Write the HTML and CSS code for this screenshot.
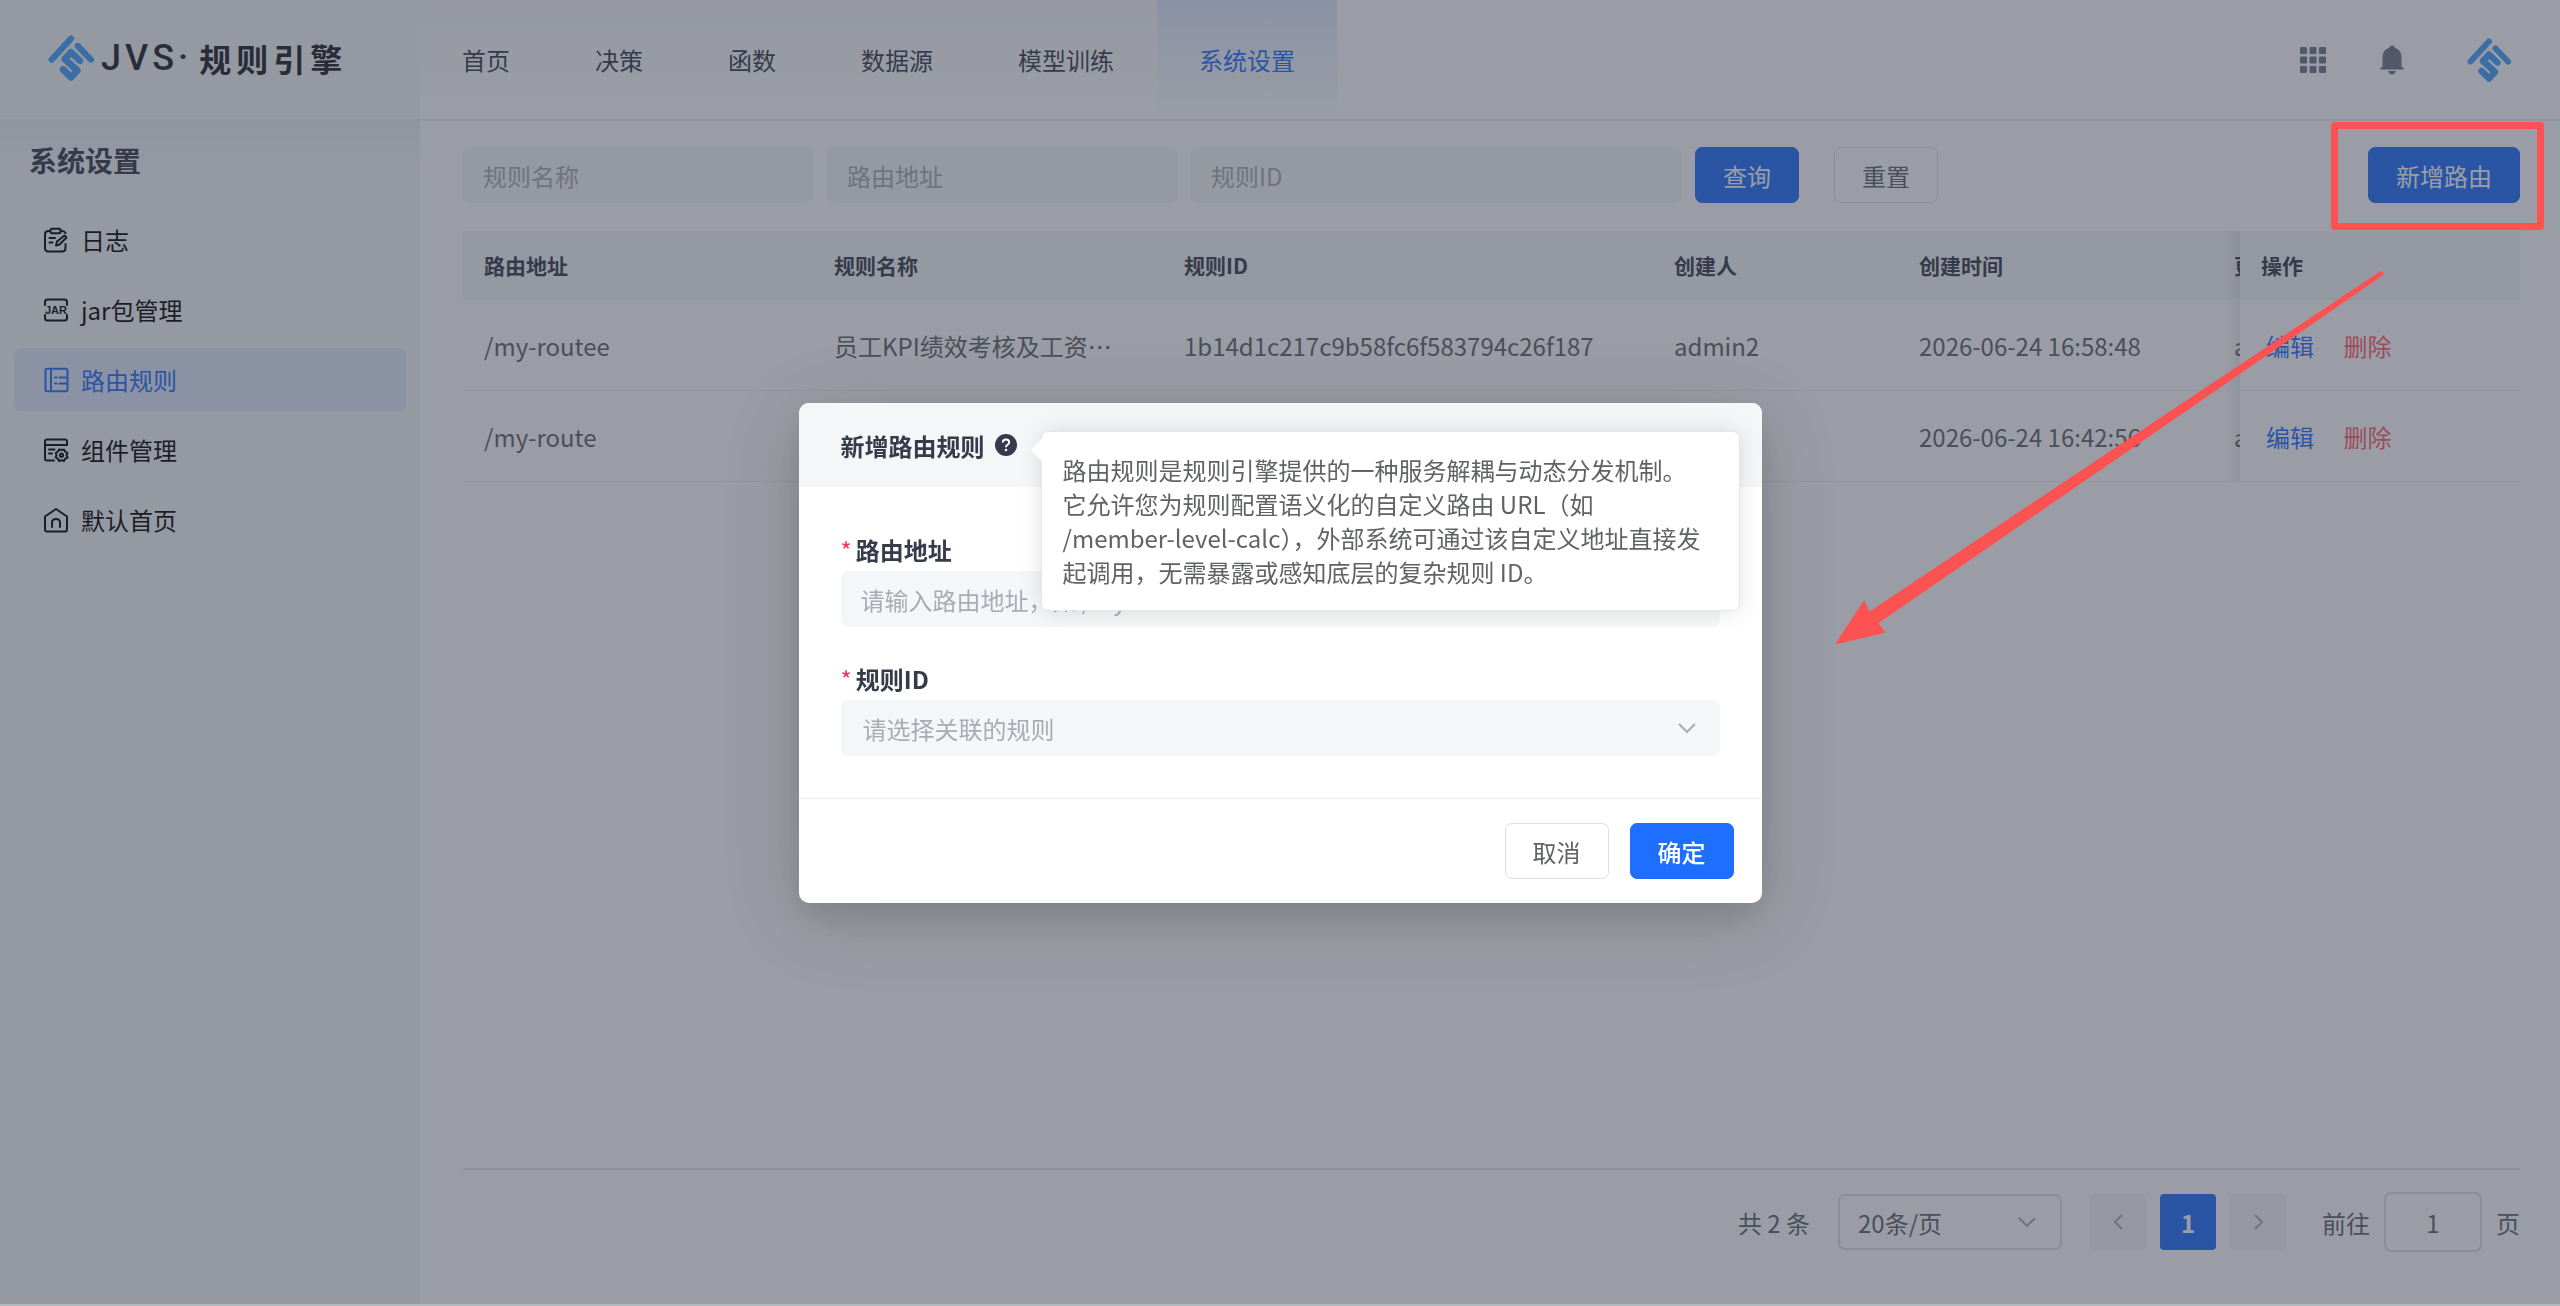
FILE: index.html
```html
<!DOCTYPE html>
<html lang="zh-CN">
<head>
    <meta charset="UTF-8">
    <meta name="viewport" content="width=device-width, initial-scale=1.0">
    <title>JVS·规则引擎 - 路由规则</title>
    <link rel="stylesheet" href="styles.css">
</head>
<body>
    <svg class="sprite" aria-hidden="true">
        <symbol id="jvs-logo" viewBox="0 0 44 44">
            <g fill="none" stroke="currentColor" stroke-width="6" stroke-linecap="round" stroke-linejoin="round">
                <path d="M3.500 23.500 22 3.500"/>
                <path d="M28.500 10.500 41 23.500"/>
                <path d="M30.500 24.500 22 16.500 16 23 28 34 22 40.500 14.500 33" stroke-width="6.500"/>
            </g>
        </symbol>
    </svg>

    <div class="app">
        <aside class="sidebar">
            <div class="brand">
                <svg class="brand-icon" aria-hidden="true"><use href="#jvs-logo"/></svg>
                <span class="brand-en">JVS·</span>
                <span class="brand-name">规则引擎</span>
            </div>
            <div class="menu">
                <h2 class="menu-title">系统设置</h2>
                <a href="#" class="menu-item">
                    <svg viewBox="0 0 24 24" class="menu-icon" aria-hidden="true">
                        <path d="M6 3H4.500Q1 3 1 6.500V20Q1 23.500 4.500 23.500H18Q21.500 23.500 21.500 20V16M17 3H18Q20.500 3 21.500 5"/>
                        <rect x="6.500" y="0.800" width="10" height="4.500" rx="1.500"/>
                        <path d="M5.500 10H11M5.500 14.500H8.500M12 17.500 13 13.500 20.500 7.500 22.500 9.500 15.500 16.500Z"/>
                    </svg>
                    日志
                </a>
                <a href="#" class="menu-item">
                    <svg viewBox="0 0 24 24" class="menu-icon" aria-hidden="true">
                        <path d="M1 7V4Q1 1.500 3.500 1.500H20.500Q23 1.500 23 4V7M1 17V20Q1 22.500 3.500 22.500H20.500Q23 22.500 23 20V17"/>
                        <text x="12" y="16" class="jar-text">JAR</text>
                    </svg>
                    jar包管理
                </a>
                <a href="#" class="menu-item active">
                    <svg viewBox="0 0 24 24" class="menu-icon" aria-hidden="true">
                        <rect x="1.500" y="0.800" width="22" height="22.500" rx="1.500"/>
                        <path d="M7 1V23M11 9.500H12.500M15.500 9.500H23M11 15.500H12.500M15.500 15.500H23"/>
                    </svg>
                    路由规则
                </a>
                <a href="#" class="menu-item">
                    <svg viewBox="0 0 24 24" class="menu-icon" aria-hidden="true">
                        <path d="M10 22.500H3Q1 22.500 1 20.500V3.500Q1 1.500 3 1.500H21Q23 1.500 23 3.500V7H1M5 11.500H10.500M5 15.500H8"/>
                        <path d="M15 11.500 17.500 12 20 11.500 21 13.500 23.500 15 22.500 17.200 23.500 19.500 21 20.800 20 23 17.500 22.300 15 23 14 20.800 11.700 19.500 12.500 17.200 11.700 15 14 13.500Z"/>
                        <circle cx="17.500" cy="17.200" r="1.600"/>
                    </svg>
                    组件管理
                </a>
                <a href="#" class="menu-item">
                    <svg viewBox="0 0 24 24" class="menu-icon" aria-hidden="true">
                        <path d="M1 8.500 12 1 23 8.500V21.500Q23 23.500 21 23.500H3Q1 23.500 1 21.500Z"/>
                        <path d="M8 19V14.500Q8 11 12 11Q16 11 16 14.500V19"/>
                    </svg>
                    默认首页
                </a>
            </div>
        </aside>

        <div class="main">
            <header class="header">
                <nav class="nav">
                    <a href="#" class="nav-item">首页</a>
                    <a href="#" class="nav-item">决策</a>
                    <a href="#" class="nav-item">函数</a>
                    <a href="#" class="nav-item">数据源</a>
                    <a href="#" class="nav-item">模型训练</a>
                    <a href="#" class="nav-item active">系统设置</a>
                </nav>
                <div class="header-actions">
                    <button class="icon-btn" aria-label="应用">
                        <svg viewBox="0 0 26 26" width="26" height="26">
                            <rect x="0" y="0" width="7" height="7" rx="1"/>
                            <rect x="9.500" y="0" width="7" height="7" rx="1"/>
                            <rect x="19" y="0" width="7" height="7" rx="1"/>
                            <rect x="0" y="9.500" width="7" height="7" rx="1"/>
                            <rect x="9.500" y="9.500" width="7" height="7" rx="1"/>
                            <rect x="19" y="9.500" width="7" height="7" rx="1"/>
                            <rect x="0" y="19" width="7" height="7" rx="1"/>
                            <rect x="9.500" y="19" width="7" height="7" rx="1"/>
                            <rect x="19" y="19" width="7" height="7" rx="1"/>
                        </svg>
                    </button>
                    <button class="icon-btn" aria-label="消息">
                        <svg viewBox="0 0 24 30" width="24" height="30">
                            <path d="M12 0.500Q14.500 0.500 14.800 2.800Q21.500 5 21.500 12V21.500L23.500 23Q24.500 24.500 23 24.500H1Q-0.500 24.500 0.500 23L2.500 21.500V12Q2.500 5 9.200 2.800Q9.500 0.500 12 0.500Z"/>
                            <path d="M8 26H16Q15 29.500 12 29.500Q9 29.500 8 26Z"/>
                        </svg>
                    </button>
                    <button class="icon-btn avatar" aria-label="用户">
                        <svg width="44" height="44"><use href="#jvs-logo"/></svg>
                    </button>
                </div>
            </header>

            <div class="content">
                <form class="search-bar">
                    <input type="text" class="field search-field" placeholder="规则名称" aria-label="规则名称">
                    <input type="text" class="field search-field" placeholder="路由地址" aria-label="路由地址">
                    <input type="text" class="field search-field wide" placeholder="规则ID" aria-label="规则ID">
                    <button type="button" class="btn btn-primary">查询</button>
                    <button type="button" class="btn btn-reset">重置</button>
                    <button type="button" class="btn btn-primary btn-add">新增路由</button>
                </form>

                <div class="table-wrap">
                    <table class="table">
                        <colgroup>
                            <col class="col-lg">
                            <col class="col-lg">
                            <col class="col-id">
                            <col class="col-sm">
                            <col class="col-time">
                            <col>
                            <col class="col-op">
                        </colgroup>
                        <thead>
                            <tr>
                                <th>路由地址</th>
                                <th>规则名称</th>
                                <th>规则ID</th>
                                <th>创建人</th>
                                <th>创建时间</th>
                                <th class="clip">更新人</th>
                                <th class="fixed">操作</th>
                            </tr>
                        </thead>
                        <tbody>
                            <tr>
                                <td>/my-routee</td>
                                <td>员工KPI绩效考核及工资⋯</td>
                                <td>1b14d1c217c9b58fc6f583794c26f187</td>
                                <td>admin2</td>
                                <td>2026-06-24 16:58:48</td>
                                <td class="clip">admin2</td>
                                <td class="fixed">
                                    <a href="#" class="link">编辑</a>
                                    <a href="#" class="link danger">删除</a>
                                </td>
                            </tr>
                            <tr>
                                <td>/my-route</td>
                                <td></td>
                                <td></td>
                                <td></td>
                                <td>2026-06-24 16:42:56</td>
                                <td class="clip">admin2</td>
                                <td class="fixed">
                                    <a href="#" class="link">编辑</a>
                                    <a href="#" class="link danger">删除</a>
                                </td>
                            </tr>
                        </tbody>
                    </table>
                </div>

                <div class="pagination">
                    <span>共 2 条</span>
                    <div class="select-box page-size">
                        <select aria-label="每页条数">
                            <option>20条/页</option>
                        </select>
                        <svg class="chevron" viewBox="0 0 18 10" aria-hidden="true"><path d="M1 1 9 9 17 1"/></svg>
                    </div>
                    <div class="pager">
                        <button class="page-btn" aria-label="上一页">
                            <svg viewBox="0 0 9 16" width="9" height="16"><path d="M8 1 1 8 8 15"/></svg>
                        </button>
                        <button class="page-btn current">1</button>
                        <button class="page-btn" aria-label="下一页">
                            <svg viewBox="0 0 9 16" width="9" height="16"><path d="M1 1 8 8 1 15"/></svg>
                        </button>
                    </div>
                    <label class="jumper">前往<input type="text" value="1">页</label>
                </div>
            </div>
        </div>
    </div>

    <div class="overlay">
        <div class="dialog" role="dialog" aria-labelledby="dialogTitle">
            <div class="dialog-header">
                <h3 class="dialog-title" id="dialogTitle">新增路由规则</h3>
                <div class="help">
                    <svg viewBox="0 0 22 22" width="22" height="22" aria-hidden="true">
                        <circle cx="11" cy="11" r="11" fill="#363b4c"/>
                        <path d="M7.800 8.600Q7.800 5.500 11 5.500Q14.200 5.500 14.200 8.300Q14.200 10 12.500 10.900Q11 11.700 11 13.200" fill="none" stroke="#fff" stroke-width="2"/>
                        <circle cx="11" cy="16" r="1.300" fill="#fff"/>
                    </svg>
                    <div class="tooltip" role="tooltip">路由规则是规则引擎提供的一种服务解耦与动态分发机制。它允许您为规则配置语义化的自定义路由 URL（如 /member-level-calc），外部系统可通过该自定义地址直接发起调用，无需暴露或感知底层的复杂规则 ID。</div>
                </div>
            </div>
            <form class="dialog-body">
                <div class="form-item">
                    <label for="routePath" class="form-label">路由地址</label>
                    <input type="text" id="routePath" class="field" placeholder="请输入路由地址，如 /my-route">
                </div>
                <div class="form-item">
                    <label for="ruleId" class="form-label">规则ID</label>
                    <div class="select-box filled">
                        <select id="ruleId">
                            <option>请选择关联的规则</option>
                        </select>
                        <svg class="chevron" viewBox="0 0 18 10" aria-hidden="true"><path d="M1 1 9 9 17 1"/></svg>
                    </div>
                </div>
            </form>
            <div class="dialog-footer">
                <button class="btn">取消</button>
                <button class="btn btn-primary btn-confirm">确定</button>
            </div>
        </div>
    </div>

    <!-- Guide marks pointing from the add button to the dialog -->
    <div class="mark-box"></div>
    <svg class="mark-arrow" viewBox="0 0 550 374" aria-hidden="true">
        <path d="M2 372 29 331 34 342 546 1 548 3 42 352 49 361Z"/>
    </svg>
</body>
</html>
```
FILE: styles.css
```css
* {
    margin: 0;
    padding: 0;
    box-sizing: border-box;
}

body {
    font-family: "Noto Sans CJK SC", sans-serif;
    font-size: 24px;
    color: #606266;
    background-color: #fff;
    position: relative;
    overflow: hidden;
}

input, select, button {
    font-family: inherit;
    font-size: inherit;
    color: inherit;
}

a {
    text-decoration: none;
}

.sprite {
    display: none;
}

.app {
    display: flex;
    min-height: 100vh;
}

/* Sidebar */
.sidebar {
    width: 420px;
    flex-shrink: 0;
    background-color: #f5f6f8;
}

.brand {
    height: 119px;
    display: flex;
    align-items: center;
    gap: 7px;
    padding: 0 48px 4px;
    line-height: 48px;
    white-space: nowrap;
    color: #1d1d26;
}

.brand-icon {
    width: 46px;
    height: 46px;
    flex-shrink: 0;
    color: #42a1ff;
}

.brand-en {
    font-family: Roboto, sans-serif;
    font-size: 36px;
    font-weight: 500;
    letter-spacing: 4px;
}

.brand-name {
    font-size: 32px;
    font-weight: 700;
    letter-spacing: 5px;
}

.menu {
    padding: 16px 14px;
    display: flex;
    flex-direction: column;
    gap: 7px;
    background: linear-gradient(180deg, #ebeef8, #f5f6f8 48px);
}

.menu-title {
    font-size: 28px;
    font-weight: 700;
    line-height: 50px;
    padding: 0 15px;
    margin-bottom: 16px;
    color: #363b4c;
}

.menu-item {
    height: 63px;
    display: flex;
    align-items: center;
    gap: 13px;
    padding: 0 30px;
    border-radius: 7px;
    color: #000;
}

.menu-item.active {
    background-color: #dfe8fa;
    color: #1e6fff;
}

.menu-icon {
    width: 24px;
    height: 24px;
    overflow: visible;
    fill: none;
    stroke: currentColor;
    stroke-width: 2;
    stroke-linecap: round;
    stroke-linejoin: round;
}

.jar-text {
    font-family: "Liberation Sans", sans-serif;
    font-size: 11px;
    font-weight: bold;
    text-anchor: middle;
    fill: currentColor;
    stroke: none;
}

/* Header */
.main {
    flex: 1;
    min-width: 0;
    display: flex;
    flex-direction: column;
}

.header {
    height: 121px;
    display: flex;
    justify-content: space-between;
    border-bottom: 2px solid #eef0f4;
}

.nav {
    display: flex;
    gap: 1px;
    background: linear-gradient(180deg, #f5f6f8, #fff);
}

.nav-item {
    display: flex;
    align-items: center;
    padding: 0 42px;
    color: #363b4c;
}

.nav-item.active {
    color: #1e6fff;
    background: linear-gradient(180deg, #dfe8fe, #fff);
}

.header-actions {
    display: flex;
    align-items: center;
    padding-right: 49px;
    gap: 54px;
}

.icon-btn {
    display: flex;
    border: none;
    background: none;
    cursor: pointer;
    color: #6f7588;
    fill: currentColor;
}

.icon-btn.avatar {
    margin-left: 9px;
    color: #42a1ff;
}

/* Content */
.content {
    flex: 1;
    display: flex;
    flex-direction: column;
    padding: 26px 40px 54px 43px;
}

.search-bar {
    display: flex;
    gap: 14px;
    margin-bottom: 28px;
}

.field {
    width: 100%;
    height: 56px;
    padding: 0 20px;
    border: none;
    border-radius: 7px;
    background-color: #f5f6f8;
}

.field::placeholder {
    color: #a8abb2;
}

.search-field {
    width: 350px;
}

.search-field.wide {
    width: 490px;
}

.btn {
    height: 56px;
    padding: 0 27px;
    border: 1px solid #dcdfe6;
    border-radius: 7px;
    background-color: transparent;
    white-space: nowrap;
    cursor: pointer;
}

.btn-primary {
    border-color: #1e6fff;
    background-color: #1e6fff;
    color: #fff;
}

.btn-reset {
    margin-left: 21px;
}

.btn-add {
    margin-left: auto;
}

.btn-confirm {
    font-weight: 500;
}

/* Table */
.table-wrap {
    flex: 1;
    overflow: hidden;
}

.table {
    width: 100%;
    table-layout: fixed;
    border-collapse: separate;
    border-spacing: 0;
}

.col-lg {
    width: 350px;
}

.col-id {
    width: 490px;
}

.col-sm {
    width: 245px;
}

.col-time {
    width: 315px;
}

.col-op {
    width: 280px;
}

.table th,
.table td {
    padding: 0 21px;
    text-align: left;
    white-space: nowrap;
    border-bottom: 1px solid #ebeef5;
    background-color: #fff;
}

.table th {
    height: 69px;
    font-size: 21px;
    font-weight: 700;
    color: #363b4c;
    background-color: #f5f6f8;
}

.table td {
    height: 91px;
}

.table .clip {
    padding-right: 0;
    overflow: hidden;
}

.table .fixed {
    position: relative;
}

/* shadow on the left edge of the pinned column */
.table .fixed::before {
    content: "";
    position: absolute;
    top: 0;
    bottom: 0;
    left: -16px;
    width: 16px;
    background: linear-gradient(90deg, rgba(0, 0, 0, 0), rgba(0, 0, 0, 0.08));
}

.link {
    margin: 0 19px 0 5px;
    color: #1e6fff;
}

.link.danger {
    color: #ff5c6c;
}

/* Pagination */
.pagination {
    display: flex;
    justify-content: flex-end;
    align-items: center;
    gap: 28px;
    padding-top: 22px;
    border-top: 2px solid #e6e8f2;
}

.select-box {
    position: relative;
    height: 56px;
    border: 2px solid #dcdfe6;
    border-radius: 7px;
}

.select-box select {
    width: 100%;
    height: 100%;
    padding: 0 18px;
    border: none;
    appearance: none;
    background: transparent;
}

.select-box.filled {
    border: none;
    background-color: #f5f6f8;
}

.select-box.filled select {
    padding: 0 22px;
    color: #a8abb2;
}

.page-size {
    width: 224px;
}

.chevron {
    position: absolute;
    top: 50%;
    right: 24px;
    width: 18px;
    height: 10px;
    margin-top: -5px;
    fill: none;
    stroke: #a8abb2;
    stroke-width: 2;
    pointer-events: none;
}

.pager {
    display: flex;
    gap: 14px;
}

.page-btn {
    width: 56px;
    height: 56px;
    display: flex;
    align-items: center;
    justify-content: center;
    border: none;
    border-radius: 4px;
    background-color: #f4f5f7;
    fill: none;
    stroke: #a8abb2;
    stroke-width: 2;
}

.page-btn.current {
    background-color: #1e6fff;
    color: #fff;
    font-weight: 700;
    stroke: none;
}

.jumper {
    display: flex;
    align-items: center;
    gap: 14px;
    padding-left: 8px;
}

.jumper input {
    width: 98px;
    height: 60px;
    border: 2px solid #dcdfe6;
    border-radius: 7px;
    background: transparent;
    text-align: center;
}

/* Dialog */
.overlay {
    position: fixed;
    inset: 0;
    display: flex;
    align-items: center;
    justify-content: center;
    background-color: rgba(54, 59, 76, 0.5);
    box-shadow: inset 0 -2px #b0bbc0;
}

.dialog {
    width: 963px;
    border-radius: 10px;
    background-color: #fff;
    box-shadow: 0 14px 84px rgba(0, 0, 0, 0.12), 0 14px 35px rgba(0, 0, 0, 0.12);
}

.dialog-header {
    height: 84px;
    display: flex;
    align-items: center;
    gap: 10px;
    padding: 0 42px;
    border-radius: 10px 10px 0 0;
    background-color: #f5f6f8;
}

.dialog-title {
    font-size: 24px;
    font-weight: 700;
    color: #363b4c;
}

.help {
    position: relative;
    display: flex;
}

.tooltip {
    position: absolute;
    top: -3px;
    left: 46px;
    width: 699px;
    padding: 21px 32px 21px 21px;
    border: 1px solid #e4e7ed;
    border-radius: 7px;
    background-color: #fff;
    box-shadow: 0 0 21px rgba(0, 0, 0, 0.12);
    line-height: 34px;
}

.tooltip::before {
    content: "";
    position: absolute;
    top: 6px;
    left: -11px;
    width: 12px;
    height: 24px;
    background-color: #fff;
    clip-path: polygon(100% 0, 0 50%, 100% 100%);
}

.dialog-body {
    display: flex;
    flex-direction: column;
    gap: 31px;
    padding: 42px;
}

.form-label {
    display: block;
    font-weight: 700;
    line-height: 42px;
    color: #363b4c;
}

.form-label::before {
    content: "*";
    margin-right: 4px;
    font-weight: 400;
    color: #f9305b;
}

.dialog-footer {
    display: flex;
    justify-content: flex-end;
    gap: 21px;
    padding: 24px 28px;
    border-top: 1px solid #ebeef0;
}

/* Guide marks */
.mark-box {
    position: absolute;
    top: 122px;
    right: 16px;
    width: 213px;
    height: 108px;
    border: 7px solid #fd5252;
    border-radius: 4px;
}

.mark-arrow {
    position: absolute;
    top: 271px;
    right: 175px;
    width: 550px;
    height: 374px;
    fill: #fd5252;
    stroke: #fd5252;
    stroke-width: 2;
    stroke-linejoin: round;
}
```
